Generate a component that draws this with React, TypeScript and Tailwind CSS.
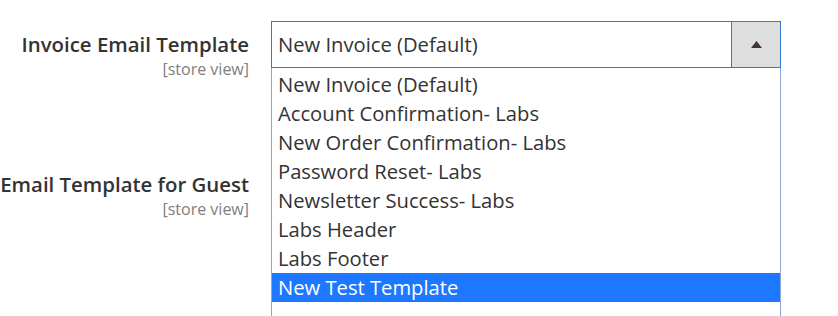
const options = [
  'New Invoice (Default)',
  'Account Confirmation- Labs',
  'New Order Confirmation- Labs',
  'Password Reset- Labs',
  'Newsletter Success- Labs',
  'Labs Header',
  'Labs Footer',
  'New Test Template',
];

function FieldLabel({ title }: { title: string }) {
  return (
    <div className="w-[249px] shrink-0 text-right">
      <div className="text-[20.4px] leading-[28px] font-semibold text-[#333]">{title}</div>
      <div className="text-[16px] leading-[22px] text-[#808080]">[store view]</div>
    </div>
  );
}

export default function App() {
  const selected = 'New Test Template';

  return (
    <div className="w-[838px] h-[316px] overflow-hidden bg-white pt-[21px] font-['Open_Sans',sans-serif]">
      {/* Invoice Email Template */}
      <div className="flex items-start">
        <div className="pt-[9px]">
          <FieldLabel title="Invoice Email Template" />
        </div>
        <div className="relative ml-[22px] w-[510px] z-10">
          <div className="flex h-[47px] border border-[#2f7bd8] bg-white">
            <div className="flex-1 flex items-center px-[6px] text-[20.2px] text-[#333]">
              New Invoice (Default)
            </div>
            <div className="w-[49px] flex items-center justify-center border-l border-[#2f7bd8] bg-[#dedede]">
              <svg width="11" height="7" viewBox="0 0 11 7">
                <path d="M5.5 0L11 7H0z" fill="#41362f" />
              </svg>
            </div>
          </div>

          {/* open list */}
          <div className="absolute left-0 top-full w-[510px] border-x border-[#8ea4d4] bg-white pt-[2px] pb-[40px]">
            {options.map((o) => (
              <div
                key={o}
                className={
                  o === selected
                    ? 'h-[29px] leading-[29px] px-[6px] text-[20.2px] bg-[#1e78ff] text-white'
                    : 'h-[29px] leading-[29px] px-[6px] text-[20.2px] text-[#333]'
                }
              >
                {o}
              </div>
            ))}
          </div>
        </div>
      </div>

      {/* Email Template for Guest */}
      <div className="mt-[90px] flex items-start">
        <FieldLabel title="Email Template for Guest" />
      </div>
    </div>
  );
}
